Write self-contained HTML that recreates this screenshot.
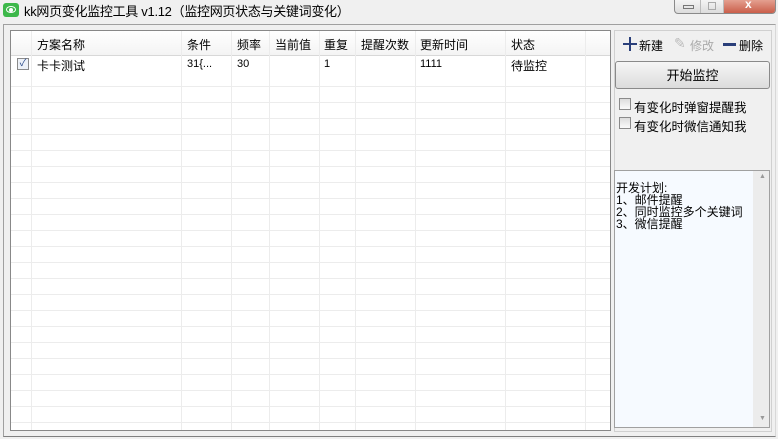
<!DOCTYPE html><html><head><meta charset="utf-8"><style>
body{margin:0;width:778px;height:439px;background:#f0f0f0;position:relative;overflow:hidden;font-family:"Liberation Sans","Noto Sans CJK SC",sans-serif;font-size:12px;color:#000}
.a{position:absolute}
.t{white-space:nowrap}
</style></head><body>
<div class="a" style="left:3px;top:3px;width:16px;height:14px;background:#3db84a;border-radius:3px"></div>
<div class="a" style="left:6px;top:6px;width:10px;height:7px;border:1.5px solid #fff;border-radius:50%;box-sizing:border-box"></div>
<div class="a" style="left:9px;top:8px;width:4px;height:4px;background:#fff;border-radius:50%"></div>
<div class="a t" style="left:24px;top:1px;font-size:13px;letter-spacing:-0.3px">kk网页变化监控工具 v1.12（监控网页状态与关键词变化）</div>
<div class="a" style="left:674px;top:0;width:100px;height:13px;border:1px solid #8a8a8a;border-top:none;border-radius:0 0 4px 4px;background:linear-gradient(#f4f4f4,#dcdcdc);overflow:hidden">
 <div class="a" style="left:25px;top:0;width:1px;height:14px;background:#bbb"></div>
 <div class="a" style="left:48px;top:0;width:1px;height:14px;background:#bbb"></div>
 <div class="a" style="left:49px;top:0;width:51px;height:14px;background:linear-gradient(#e4a090,#c85a45)"></div>
 <div class="a" style="left:8px;top:5px;width:9px;height:2px;border:1px solid #777"></div>
 <div class="a" style="left:33px;top:2px;width:6px;height:6px;border:1px solid #aaa"></div>
 <div class="a t" style="left:70px;top:-3px;color:#fff;font-weight:bold;font-size:12px">x</div>
</div>
<div class="a" style="left:3px;top:24px;width:771px;height:411px;border:1px solid #a0a0a0;border-right-color:#d8d8d8;border-bottom-color:#808080"></div>
<div class="a" style="left:10px;top:30px;width:599px;height:399px;border:1px solid #888;background:#fff;overflow:hidden">
 <div class="a" style="left:0;top:0;width:599px;height:24px;background:linear-gradient(#fff,#f4f4f4);border-bottom:1px solid #d8d8d8"></div>
 <div class="a" style="left:0;top:0;width:599px;height:399px;background:repeating-linear-gradient(to bottom,transparent 0,transparent 15px,#ececec 15px,#ececec 16px);background-position:0 40px;clip-path:inset(40px 0 0 0)"></div>
 <div class="a" style="left:20px;top:0;width:1px;height:399px;background:#ececec"></div>
 <div class="a" style="left:170px;top:0;width:1px;height:399px;background:#ececec"></div>
 <div class="a" style="left:220px;top:0;width:1px;height:399px;background:#ececec"></div>
 <div class="a" style="left:258px;top:0;width:1px;height:399px;background:#ececec"></div>
 <div class="a" style="left:308px;top:0;width:1px;height:399px;background:#ececec"></div>
 <div class="a" style="left:344px;top:0;width:1px;height:399px;background:#ececec"></div>
 <div class="a" style="left:404px;top:0;width:1px;height:399px;background:#ececec"></div>
 <div class="a" style="left:494px;top:0;width:1px;height:399px;background:#ececec"></div>
 <div class="a" style="left:574px;top:0;width:1px;height:399px;background:#ececec"></div>
 <div class="a t" style="left:26px;top:5px">方案名称</div>
 <div class="a t" style="left:176px;top:5px">条件</div>
 <div class="a t" style="left:226px;top:5px">频率</div>
 <div class="a t" style="left:264px;top:5px">当前值</div>
 <div class="a t" style="left:313px;top:5px">重复</div>
 <div class="a t" style="left:350px;top:5px">提醒次数</div>
 <div class="a t" style="left:409px;top:5px">更新时间</div>
 <div class="a t" style="left:500px;top:5px">状态</div>
 <div class="a" style="left:6px;top:27px;width:10px;height:10px;border:1px solid #8a8a8a;background:#eef2f8;font-size:10px;line-height:10px;text-align:center;color:#2a4a8a">✓</div>
 <div class="a t" style="left:26px;top:26px">卡卡测试</div>
 <div class="a t" style="left:176px;top:27px;font-size:11px">31{...</div>
 <div class="a t" style="left:226px;top:27px;font-size:11px">30</div>
 <div class="a t" style="left:313px;top:27px;font-size:11px">1</div>
 <div class="a t" style="left:409px;top:27px;font-size:11px">1111</div>
 <div class="a t" style="left:500px;top:26px">待监控</div>
</div>
<div class="a" style="left:614px;top:30px;width:156px;height:400px;border:1px solid #d0d0d0"></div>
<div class="a" style="left:623px;top:43px;width:14px;height:2px;background:#2a3f7a"></div>
<div class="a" style="left:629px;top:37px;width:2px;height:14px;background:#2a3f7a"></div>
<div class="a t" style="left:639px;top:37px">新建</div>
<div class="a t" style="left:674px;top:35px;color:#bbb;font-size:14px">✎</div>
<div class="a t" style="left:690px;top:37px;color:#aaa">修改</div>
<div class="a" style="left:723px;top:43px;width:13px;height:3px;background:#2a3f7a"></div>
<div class="a t" style="left:739px;top:37px">删除</div>
<div class="a" style="left:615px;top:61px;width:155px;height:28px;border:1px solid #8a8a8a;border-radius:3px;background:linear-gradient(#f6f6f6,#dcdcdc);text-align:center;line-height:27px;font-size:13px;box-sizing:border-box">开始监控</div>
<div class="a" style="left:619px;top:98px;width:12px;height:12px;border:1px solid #8a8a8a;background:linear-gradient(#ddd,#fafafa);box-sizing:border-box"></div>
<div class="a t" style="left:634px;top:97px;font-size:12.5px">有变化时弹窗提醒我</div>
<div class="a" style="left:619px;top:117px;width:12px;height:12px;border:1px solid #8a8a8a;background:linear-gradient(#ddd,#fafafa);box-sizing:border-box"></div>
<div class="a t" style="left:634px;top:116px;font-size:12.5px">有变化时微信通知我</div>
<div class="a" style="left:614px;top:170px;width:156px;height:258px;border:1px solid #a0a0a0;background:#f6faff;box-sizing:border-box">
 <div class="a" style="left:138px;top:0;width:16px;height:256px;background:#ececec"></div>
 <div class="a t" style="left:144px;top:2px;font-size:7px;color:#999">▲</div>
 <div class="a t" style="left:144px;top:244px;font-size:7px;color:#999">▼</div>
 <div class="a" style="left:1px;top:11px;line-height:12px;font-size:12px">开发计划:<br>1、邮件提醒<br>2、同时监控多个关键词<br>3、微信提醒</div>
</div>
</body></html>
